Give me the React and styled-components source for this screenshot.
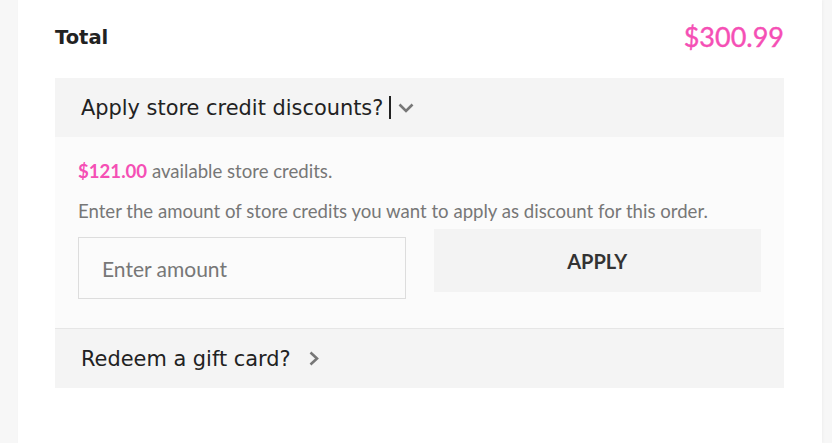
import React from "react";
import styled, { createGlobalStyle } from "styled-components";

const Global = createGlobalStyle`
  html, body {
    margin: 0;
    padding: 0;
    background: #f7f7f7;
  }
  body {
    font-family: "Lato", "Liberation Sans", sans-serif;
  }
`;

const Page = styled("div")`
  height: 443px;
  overflow: hidden;
  padding-left: 18px;
`;

const Card = styled("div")`
  width: 804px;
  min-height: 443px;
  box-sizing: border-box;
  background: #ffffff;
  padding: 18px 38px 0 37px;
  box-shadow: 1px 0 3px rgba(0, 0, 0, 0.04);
`;

const TotalRow = styled("div")`
  height: 38px;
  display: flex;
  align-items: center;
  justify-content: space-between;
  margin-bottom: 22px;
`;

const TotalLabel = styled("span")`
  font-family: "DejaVu Sans", "Open Sans", sans-serif;
  font-weight: 700;
  font-size: 19.5px;
  color: #222222;
`;

const TotalPrice = styled("span")`
  font-family: "Lato", sans-serif;
  font-size: 27px;
  color: #f54fb5;
  margin-top: -2px;
  -webkit-text-stroke: 0.4px #f54fb5;
`;

const SectionHead = styled("div")`
  height: 59px;
  display: flex;
  align-items: center;
  padding-left: 26px;
  background: #f4f4f4;
  border-top: ${(p) => (p.$divider ? "1px solid #e6e6e6" : "none")};
  font-family: "DejaVu Sans", "Open Sans", sans-serif;
  font-size: 20.9px;
  color: #222222;
`;

const Caret = styled("span")`
  display: inline-block;
  width: 2px;
  height: 23px;
  background: #222222;
  margin-left: 6px;
`;

const Chevron = styled("svg")`
  margin-left: ${(p) => p.$gap}px;
  flex-shrink: 0;
`;

const Body = styled("div")`
  background: #fbfbfb;
  padding: 22px 23px 29px;
  color: #777777;
  font-size: 18.6px;
`;

const Line = styled("p")`
  margin: 0 0 ${(p) => p.$after}px;
  line-height: 24px;
`;

const Credit = styled("span")`
  color: #f54fb5;
  font-weight: 700;
`;

const Form = styled("div")`
  display: grid;
  grid-template-columns: 1fr 1fr;
  column-gap: 28px;
  align-items: start;
`;

const AmountInput = styled("input")`
  margin-top: 8px;
  height: 62px;
  box-sizing: border-box;
  border: 1px solid #dddddd;
  background: #fbfbfb;
  padding: 0 23px;
  font-family: "Lato", sans-serif;
  font-size: 21px;
  color: #333333;
  outline: none;
  &::placeholder {
    color: #777777;
  }
`;

const ApplyButton = styled("button")`
  height: 63px;
  border: none;
  background: #f3f3f3;
  font-family: "Lato", sans-serif;
  font-weight: 700;
  font-size: 20px;
  color: #333333;
  text-transform: uppercase;
  cursor: pointer;
`;

export default function App() {
  return (
    <>
      <Global />
      <Page>
        <Card>
          <TotalRow>
            <TotalLabel>Total</TotalLabel>
            <TotalPrice>$300.99</TotalPrice>
          </TotalRow>

          <SectionHead>
            Apply store credit discounts?
            <Caret />
            <Chevron $gap={7} width="16" height="10" viewBox="0 0 16 10">
              <path d="M1.5 1.5 L8 8 L14.5 1.5" fill="none" stroke="#777" strokeWidth="2.6" />
            </Chevron>
          </SectionHead>

          <Body>
            <Line $after={16}>
              <Credit>$121.00</Credit> available store credits.
            </Line>
            <Line $after={6}>
              Enter the amount of store credits you want to apply as discount for this order.
            </Line>
            <Form>
              <AmountInput placeholder="Enter amount" />
              <ApplyButton>Apply</ApplyButton>
            </Form>
          </Body>

          <SectionHead $divider>
            Redeem a gift card?
            <Chevron $gap={18} width="10" height="15" viewBox="0 0 10 15">
              <path d="M1.5 1.5 L8 7.5 L1.5 13.5" fill="none" stroke="#777" strokeWidth="2.6" />
            </Chevron>
          </SectionHead>
        </Card>
      </Page>
    </>
  );
}
